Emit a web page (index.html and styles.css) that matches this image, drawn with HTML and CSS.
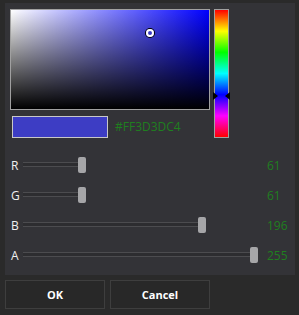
FILE: index.html
```html
<!DOCTYPE html>
<html lang="en">
<head>
    <meta charset="UTF-8">
    <meta name="viewport" content="width=device-width, initial-scale=1.0">
    <title>Color Picker</title>
    <link rel="stylesheet" href="styles.css">
</head>
<body>
    <div class="dialog">
        <div class="panel">
            <!-- Saturation / value square, hue bar and preview -->
            <div class="picker">
                <div class="picker-left">
                    <div class="sv-square">
                        <span class="sv-marker"></span>
                    </div>
                    <div class="preview">
                        <div class="swatch"></div>
                        <span class="hex">#FF3D3DC4</span>
                    </div>
                </div>
                <div class="hue-bar">
                    <span class="hue-arrow hue-arrow-left"></span>
                    <span class="hue-arrow hue-arrow-right"></span>
                </div>
            </div>
            <!-- Channel sliders -->
            <div class="sliders">
                <div class="slider-row">
                    <span class="channel">R</span>
                    <div class="track">
                        <div class="track-fill" style="width: 55px"></div>
                        <span class="thumb" style="left: 55px"></span>
                    </div>
                    <span class="value">61</span>
                </div>
                <div class="slider-row">
                    <span class="channel">G</span>
                    <div class="track">
                        <div class="track-fill" style="width: 55px"></div>
                        <span class="thumb" style="left: 55px"></span>
                    </div>
                    <span class="value">61</span>
                </div>
                <div class="slider-row">
                    <span class="channel">B</span>
                    <div class="track">
                        <div class="track-fill" style="width: 175px"></div>
                        <span class="thumb" style="left: 175px"></span>
                    </div>
                    <span class="value">196</span>
                </div>
                <div class="slider-row">
                    <span class="channel">A</span>
                    <div class="track">
                        <div class="track-fill" style="width: 227px"></div>
                        <span class="thumb" style="left: 227px"></span>
                    </div>
                    <span class="value">255</span>
                </div>
            </div>
        </div>
        <div class="buttons">
            <button class="btn">OK</button>
            <button class="btn">Cancel</button>
        </div>
    </div>
</body>
</html>
```

FILE: styles.css
```css
html, body {
    margin: 0;
    padding: 0;
    background-color: #2a2a2a;
}

body {
    font-family: "Open Sans", "Noto Sans", sans-serif;
    width: 299px;
    height: 315px;
    overflow: hidden;
}

.dialog {
    padding: 3px 4px 0 5px;
}

.panel {
    background-color: #333337;
    width: 290px;
    height: 272px;
    box-sizing: border-box;
    padding: 6px 0 0 5px;
}

.picker {
    display: flex;
    align-items: flex-start;
}

.sv-square {
    position: relative;
    width: 200px;
    height: 101px;
    box-sizing: border-box;
    border: 1px solid #a0a0a0;
    background:
        linear-gradient(to top, #000, rgba(0, 0, 0, 0)),
        linear-gradient(to right, #fff, #0000ff);
}

.sv-marker {
    position: absolute;
    left: 139px;
    top: 23px;
    width: 4px;
    height: 4px;
    border: 2px solid #fff;
    border-radius: 50%;
    box-shadow: 0 0 0 1px #000;
    transform: translate(-50%, -50%);
}

.preview {
    display: flex;
    align-items: center;
    margin-top: 6px;
    padding-left: 2px;
}

.swatch {
    width: 96px;
    height: 22px;
    box-sizing: border-box;
    border: 1px solid #c8c8c8;
    background-color: #3d3dc4;
}

.hex {
    margin-left: 7px;
    color: #1f7f1f;
    font-size: 12px;
    line-height: 22px;
}

.hue-bar {
    position: relative;
    margin-left: 4px;
    width: 15px;
    height: 129px;
    box-sizing: border-box;
    border: 1px solid #a0a0a0;
    background: linear-gradient(to bottom, #ff0000 0%, #ffff00 16.67%, #00ff00 33.33%, #00ffff 50%, #0000ff 66.67%, #ff00ff 83.33%, #ff0000 100%);
}

.hue-arrow {
    position: absolute;
    top: 82px;
    width: 0;
    height: 0;
    border-top: 4px solid transparent;
    border-bottom: 4px solid transparent;
}

.hue-arrow-left {
    left: -2px;
    border-left: 5px solid #000;
}

.hue-arrow-right {
    right: -2px;
    border-right: 5px solid #000;
}

.sliders {
    margin-top: 12px;
}

.slider-row {
    display: flex;
    align-items: center;
    height: 30px;
    padding-left: 1px;
}

.channel {
    width: 12px;
    color: #f0f0f0;
    font-size: 12px;
}

.track {
    position: relative;
    width: 235px;
    height: 16px;
}

.track-fill {
    position: absolute;
    left: 0;
    top: 5px;
    height: 3px;
    border-top: 1px solid #4c4c4f;
    border-bottom: 1px solid #4c4c4f;
    background-color: #2d2d30;
}

.thumb {
    position: absolute;
    top: 0;
    width: 8px;
    height: 16px;
    border-radius: 2px;
    background-color: #a6a6a8;
}

.value {
    margin-left: 9px;
    color: #1f7f1f;
    font-size: 12px;
}

.buttons {
    display: flex;
    gap: 5px;
    margin-top: 5px;
}

.btn {
    width: 100px;
    height: 29px;
    background-color: #282828;
    border: 1px solid #3e3e3e;
    color: #ffffff;
    font-family: "Open Sans", "Noto Sans", sans-serif;
    font-weight: bold;
    font-size: 11px;
    padding: 0;
}
```
